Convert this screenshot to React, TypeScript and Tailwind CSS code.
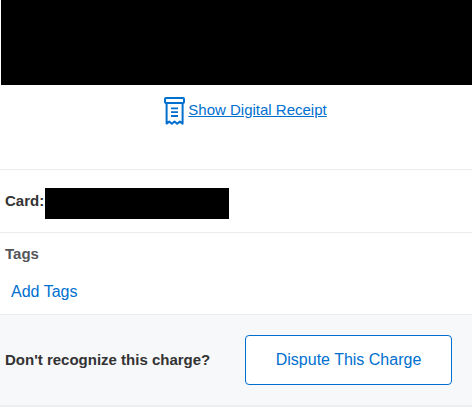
function ReceiptIcon() {
  return (
    <svg
      className="h-7 w-[21px] shrink-0"
      viewBox="0 0 21 28"
      fill="none"
      stroke="currentColor"
      strokeWidth="2"
      strokeLinejoin="round"
      aria-hidden="true"
    >
      <rect x="1" y="1" width="19" height="5" rx="1" />
      <path d="M2.6 6V26.6L5.2 24.6L7.9 26.8L10.5 24.6L13.1 26.8L15.8 24.6L18.6 26.6V6" />
      <path d="M7 11.4H14M7 15.2H14M7 19H14" strokeWidth="1.8" />
    </svg>
  );
}

export default function App() {
  return (
    <main className="bg-white font-['Liberation_Sans',Arial,sans-serif] text-[#333333]">
      <div className="ml-px h-[85px] bg-black" />

      <section className="flex justify-center border-b border-[#ecedee] pt-3 pb-11 pl-[19px]">
        <a href="#receipt" className="flex gap-[3px] text-[15px] leading-[26px] text-[#006fcf]">
          <ReceiptIcon />
          <span className="underline">Show Digital Receipt</span>
        </a>
      </section>

      <section className="flex gap-px border-b border-[#ecedee] px-[5px] pt-[18px] pb-[13px]">
        <h2 className="text-[15px] leading-[26px] font-bold">Card:</h2>
        <div className="h-[31px] w-[184px] bg-black" />
      </section>

      <section className="border-b border-[#ecedee] px-[5px] pt-2 pb-[9px]">
        <h2 className="text-[15px] leading-[26px] font-bold text-[#53565a]">Tags</h2>
        <button type="button" className="mt-3 block px-[6px] text-base leading-[26px] text-[#006fcf]">
          Add Tags
        </button>
      </section>

      <section className="flex items-center justify-between border-b-2 border-[#ecedee] bg-[#f7f8f9] py-5 pr-5 pl-[5px]">
        <p className="text-[15px] leading-[26px] font-bold">Don't recognize this charge?</p>
        <button
          type="button"
          className="h-[50px] w-[207px] rounded border border-[#006fcf] bg-white text-base text-[#006fcf]"
        >
          Dispute This Charge
        </button>
      </section>
    </main>
  );
}
